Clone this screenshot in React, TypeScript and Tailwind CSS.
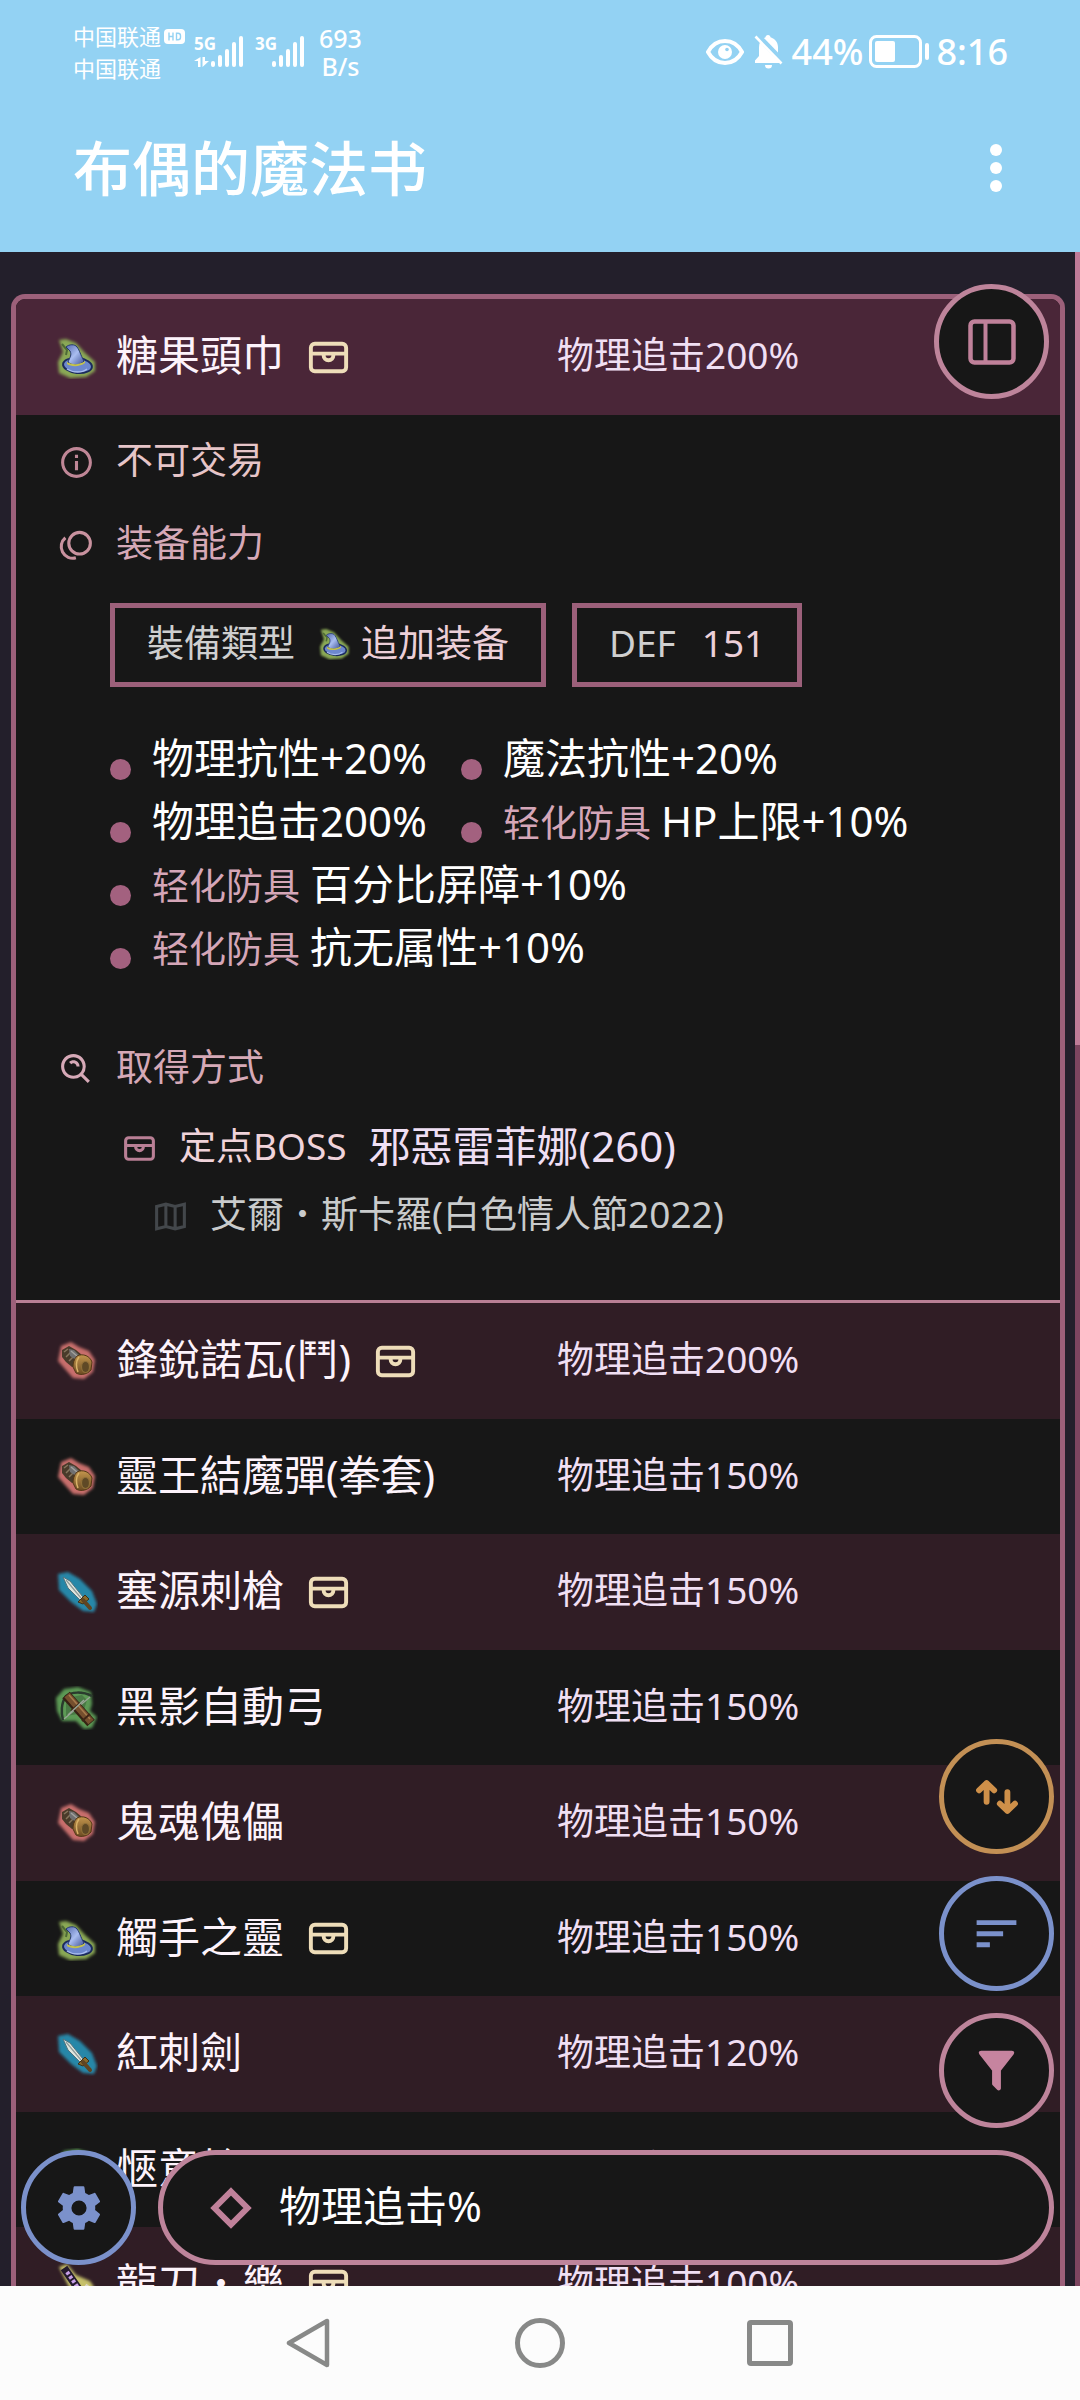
import type { ReactNode } from "react";
import { BiInfoCircle, BiSearchAlt } from "react-icons/bi";

type ItemKind = "hat" | "knuckle" | "sword" | "bow" | "katana";

interface Item {
  name: ReactNode;
  kind: ItemKind;
  stat: string;
  boss?: boolean;
}

/* Full-width interpunct used in item and map names */
function Dot() {
  return <span className="font-['Noto_Sans_CJK_TC',sans-serif] leading-none font-light">‧</span>;
}

const ITEMS: Item[] = [
  { name: "鋒銳諾瓦(鬥)", kind: "knuckle", stat: "物理追击200%", boss: true },
  { name: "靈王結魔彈(拳套)", kind: "knuckle", stat: "物理追击150%" },
  { name: "塞源刺槍", kind: "sword", stat: "物理追击150%", boss: true },
  { name: "黑影自動弓", kind: "bow", stat: "物理追击150%" },
  { name: "鬼魂傀儡", kind: "knuckle", stat: "物理追击150%" },
  { name: "觸手之靈", kind: "hat", stat: "物理追击150%", boss: true },
  { name: "紅刺劍", kind: "sword", stat: "物理追击120%" },
  { name: "愜意槍", kind: "bow", stat: "物理追击100%" },
  { name: <>龍刀<Dot />樂</>, kind: "katana", stat: "物理追击100%", boss: true },
];

/* ---------- item artwork ---------- */

function Defs() {
  return (
    <svg className="absolute size-0" aria-hidden="true">
      <defs>
        <filter id="glow" x="-30%" y="-30%" width="160%" height="160%">
          <feGaussianBlur stdDeviation="1.7" />
        </filter>
        <filter id="soft" x="-10%" y="-10%" width="120%" height="120%">
          <feGaussianBlur stdDeviation="0.5" />
        </filter>
        <linearGradient id="hatBlue" x1="0" y1="0" x2="1" y2="1">
          <stop offset="0" stopColor="#5468ac" />
          <stop offset="0.5" stopColor="#a9bdf0" />
          <stop offset="1" stopColor="#3d5094" />
        </linearGradient>
        <linearGradient id="cuff" x1="0" y1="0" x2="0" y2="1">
          <stop offset="0" stopColor="#c3954c" />
          <stop offset="1" stopColor="#6b4c24" />
        </linearGradient>
      </defs>
    </svg>
  );
}

function HatArt() {
  return (
    <>
      <path d="M5 5 12 4 22 8 31 18 41 27 41 36 32 42 16 43 5 38 4 27 9 17z" fill="#8aa855" filter="url(#glow)" />
      <g filter="url(#soft)">
        <path d="M8 9 13 15 12 20" stroke="#4d6a35" strokeWidth="2" fill="none" />
        <ellipse cx="23.5" cy="30.5" rx="15.5" ry="8.5" fill="#1d2c5c" transform="rotate(6 23.5 30.5)" />
        <ellipse cx="23.5" cy="30.5" rx="13.5" ry="6.5" fill="#6d88ce" transform="rotate(6 23.5 30.5)" />
        <path d="M12 12c3-3 9-3 11 0 3 4 3 7 7 14-4 5-12 5-16 1 2-5 4-7 2-11z" fill="url(#hatBlue)" stroke="#25376e" />
        <path d="M13 27c5 3 13 3 18-1v2c-5 4-14 4-18 1z" fill="#c4c24e" />
        <path d="M13 34c6 4 15 4 20 0" stroke="#a9bdf0" strokeWidth="1.5" fill="none" />
      </g>
    </>
  );
}

function KnuckleArt() {
  return (
    <>
      <path d="M7 7 17 3 25 8 35 12 41 21 39 33 30 40 19 39 11 30 4 22z" fill="#c86e6c" filter="url(#glow)" />
      <g filter="url(#soft)">
        <path d="M8 11 15 7 22 11 28 16 25 27 18 28 12 23 8 18z" fill="#4a3a2a" />
        <path d="M10 13 14 10M12 18 17 13M15 22 20 17" stroke="#86765c" strokeWidth="1.5" />
        <path d="M15 10 20 11 26 17 22 21 16 17z" fill="#6f7071" />
        <path d="m17 12 6 5" stroke="#a3a29d" strokeWidth="1.5" />
        <path d="M23 17c6-3 13 0 15 6l-1 8c-3 4-10 6-15 3l-3-6c0-4 1-8 4-11z" fill="url(#cuff)" stroke="#553817" />
        <ellipse cx="31.500" cy="28" rx="4" ry="5.5" fill="#5f4a26" stroke="#8f6f38" strokeWidth="1.2" />
        <path d="M25 18c-3 4-3 10-1 15" stroke="#d9b267" strokeWidth="1.5" fill="none" />
      </g>
    </>
  );
}

function SwordArt() {
  return (
    <>
      <path d="M4 4 14 2 26 9 38 21 43 34 40 42 29 41 17 32 5 20z" fill="#2787a8" filter="url(#glow)" />
      <g filter="url(#soft)">
        <path d="M9 7 16 11 29 27 26 30 14 18z" fill="#dfe6df" stroke="#53727c" />
        <path d="m12 10 15 18" stroke="#8c9a99" strokeWidth="1.2" />
        <path d="m24 32 7-7 4 4-6 5z" fill="#8a6a2b" stroke="#3c2f16" />
        <path d="m29 30 7 8" stroke="#5f4420" strokeWidth="4" strokeLinecap="round" />
      </g>
    </>
  );
}

function BowArt() {
  return (
    <>
      <path d="M10 3 24 1 37 6 38 18 36 25 43 31 38 42 30 43 22 35 8 35 3 25 2 12z" fill="#5c9a55" filter="url(#glow)" />
      <g filter="url(#soft)" fill="none">
        <path d="M12 12 28 9 33 14 30 24 24 28 12 30z" fill="#4a7a45" />
        <path d="M38 10C28 5 17 6 12 10 7 17 7 27 9 34" stroke="#2b3a2d" strokeWidth="2.5" />
        <path d="M36 11 10 33" stroke="#9aa697" strokeWidth="1.2" />
        <path d="m12 9 25 28" stroke="#362212" strokeWidth="10" />
        <path d="m13 9 24 27" stroke="#75502f" strokeWidth="7" />
        <path d="m15 9 21 24" stroke="#a87b4c" strokeWidth="1.5" />
        <path d="m28 35 8-7M17 25l9-8" stroke="#3f2817" strokeWidth="2" />
        <path d="M30 14 14 29" stroke="#9aa697" strokeWidth="1.5" />
      </g>
    </>
  );
}

function KatanaArt() {
  return (
    <>
      <path d="M5 4 13 1 22 12 36 18 40 24 30 40 20 34z" fill="#c6c06a" filter="url(#glow)" />
      <path d="m10 5 20 29" stroke="#241a2c" strokeWidth="8" />
      <path d="m13 9 14 20" stroke="#c8a0e8" strokeWidth="4" strokeDasharray="3 2" />
      <path d="m24 34 10-12" stroke="#ded6c2" strokeWidth="4" />
    </>
  );
}

const ART: Record<ItemKind, () => ReactNode> = {
  hat: HatArt,
  knuckle: KnuckleArt,
  sword: SwordArt,
  bow: BowArt,
  katana: KatanaArt,
};

function ItemIcon({ kind, small = false }: { kind: ItemKind; small?: boolean }) {
  const Art = ART[kind];
  return (
    <svg viewBox="0 0 44 44" className={small ? "size-[34px] shrink-0" : "size-[44px] shrink-0"} aria-hidden="true">
      <Art />
    </svg>
  );
}

/* ---------- line icons ---------- */

function ChestIcon({ className }: { className: string }) {
  return (
    <svg viewBox="0 0 24 24" fill="none" stroke="currentColor" strokeWidth="2" className={className} aria-hidden="true">
      <rect x="3" y="5" width="18" height="14" rx="2" />
      <path d="M3 10h18M9.5 10.3v.6a2.5 2.5 0 0 0 5 0v-.6" />
    </svg>
  );
}

function AbilityIcon() {
  return (
    <svg viewBox="0 0 24 24" fill="none" stroke="currentColor" strokeWidth="2" className="size-[37px] text-[#c9929f]" aria-hidden="true">
      <circle cx="14" cy="10.5" r="7" />
      <path d="M4.8 7A7.5 7.5 0 0 0 11.6 20" />
    </svg>
  );
}

function MapIcon() {
  return (
    <svg viewBox="0 0 24 24" fill="none" stroke="currentColor" strokeWidth="2" className="size-[37px] text-[#43474b]" aria-hidden="true">
      <path d="M3 5.5 9 4l6 1.5L21 4v14.5L15 20l-6-1.5L3 20zM9 4v14.5M15 5.5V20" />
    </svg>
  );
}

function PanelIcon() {
  return (
    <svg viewBox="0 0 48 46" fill="none" stroke="currentColor" strokeWidth="4.5" className="w-[48px]" aria-hidden="true">
      <rect x="2.5" y="2.5" width="43" height="41" rx="4" />
      <path d="M17.5 3v40" strokeWidth="4" />
    </svg>
  );
}

function SwapIcon() {
  return (
    <svg viewBox="0 0 24 24" fill="none" stroke="currentColor" strokeWidth="2.7" strokeLinecap="round" strokeLinejoin="round" className="size-[52px]" aria-hidden="true">
      <path d="M7.2 14.2V5.6M3.7 8.9l3.5-3.3 3.5 3.3M16.8 9.8v8.6M13.3 15.1l3.5 3.3 3.5-3.3" />
    </svg>
  );
}

function SortIcon() {
  return (
    <svg viewBox="0 0 24 24" fill="currentColor" className="size-[53px]" aria-hidden="true">
      <path d="M3 6h18v2.2H3zM3 11h12v2.2H3zM3 16h6v2.2H3z" />
    </svg>
  );
}

function FunnelIcon() {
  return (
    <svg viewBox="0 0 24 24" fill="currentColor" className="size-[53px]" aria-hidden="true">
      <path d="M14 12v7.88c.04.3-.06.62-.29.83a.996.996 0 0 1-1.41 0l-2.01-2.01a.989.989 0 0 1-.29-.83V12h-.03L4.21 4.62a1 1 0 0 1 .17-1.4c.19-.14.4-.22.62-.22h14c.22 0 .43.08.62.22a1 1 0 0 1 .17 1.4L14.03 12H14Z" />
    </svg>
  );
}

function CogIcon() {
  return (
    <svg viewBox="0 0 24 24" fill="currentColor" className="size-[52px]" aria-hidden="true">
      <path d="M12 15.5A3.5 3.5 0 0 1 8.5 12 3.5 3.5 0 0 1 12 8.5a3.5 3.5 0 0 1 3.5 3.5 3.5 3.5 0 0 1-3.5 3.5m7.43-2.53c.04-.32.07-.64.07-.97s-.03-.66-.07-1l2.11-1.63c.19-.15.24-.42.12-.64l-2-3.46c-.12-.22-.39-.31-.61-.22l-2.49 1c-.52-.39-1.06-.73-1.69-.98l-.37-2.65A.506.506 0 0 0 14 2h-4c-.25 0-.46.18-.5.42l-.37 2.65c-.63.25-1.17.59-1.69.98l-2.49-1c-.22-.09-.49 0-.61.22l-2 3.46c-.13.22-.07.49.12.64L4.57 11c-.04.34-.07.67-.07 1s.03.65.07.97l-2.11 1.66c-.19.15-.25.42-.12.64l2 3.46c.12.22.39.3.61.22l2.49-1.01c.52.4 1.06.74 1.69.99l.37 2.65c.04.24.25.42.5.42h4c.25 0 .46-.18.5-.42l.37-2.65c.63-.26 1.17-.59 1.69-.99l2.49 1.01c.22.08.49 0 .61-.22l2-3.46c.12-.22.07-.49-.12-.64z" />
    </svg>
  );
}

/* ---------- status bar ---------- */

function Signal({ label, data = false }: { label: string; data?: boolean }) {
  return (
    <div className="relative h-8 w-[50px]">
      <span className="absolute top-0 left-0 text-[17px] leading-4 font-bold">{label}</span>
      <svg viewBox="0 0 50 32" fill="currentColor" className="size-full" aria-hidden="true">
        {data && <path d="M6.5 21v10H4v-6H0zM8.5 21v10l6.5-6h-4v-4z" />}
        <rect x="17" y="25" width="4" height="6" rx="2" />
        <rect x="24" y="19" width="4" height="12" rx="2" />
        <rect x="31" y="13" width="4" height="18" rx="2" />
        <rect x="38" y="6" width="4" height="25" rx="2" />
        <rect x="45" y="0" width="4" height="31" rx="2" />
      </svg>
    </div>
  );
}

function StatusBar() {
  return (
    <div className="flex h-[104px] items-center justify-between pr-[72px] pl-[73px]">
      <div className="flex items-center">
        <div className="text-[22px] leading-8">
          <div className="flex items-center gap-[3px]">
            中国联通
            <svg viewBox="0 0 21 15" className="w-[21px]" aria-label="HD">
              <rect width="21" height="15" rx="4" fill="#fff" />
              <path d="M5 3.5v8M9 3.5v8M5 7.5h4M12.5 4.2h1.5a2.5 2.5 0 0 1 2.5 2.5v1.6a2.5 2.5 0 0 1-2.5 2.5h-1.5z" fill="none" stroke="#93d2f3" strokeWidth="1.4" />
            </svg>
          </div>
          <div>中国联通</div>
        </div>
        <div className="ml-[9px] flex gap-[11px]">
          <Signal label="5G" data />
          <Signal label="3G" />
        </div>
        <div className="ml-[14px] text-center text-[25px] leading-7 font-medium">
          <div>693</div>
          <div>B/s</div>
        </div>
      </div>
      <div className="flex items-center text-[36px] leading-[48px] font-medium">
        <svg viewBox="0 0 38 26" className="w-[38px]" aria-hidden="true">
          <path d="M2 13C6 5.5 12 2 19 2s13 3.5 17 11c-4 7.5-10 11-17 11S6 20.5 2 13z" fill="none" stroke="#fff" strokeWidth="4" />
          <circle cx="19" cy="13" r="7" fill="#fff" />
          <circle cx="21" cy="10.5" r="1.8" fill="#93d2f3" />
        </svg>
        <svg viewBox="0 0 30 34" className="ml-[10px] w-[30px]" aria-hidden="true">
          <path d="M14 0c1.5 0 2.5 1 2.5 2.3 4.5 1.4 7.5 5 7.5 10V21l4 4.5V28H1v-2.5L5 21v-8.7C5 7.3 7.5 3.7 11.5 2.3 11.5 1 12.5 0 14 0zM11 30h7a3.5 3.5 0 0 1-7 0z" fill="#fff" />
          <path d="m1-2 30 31" stroke="#93d2f3" strokeWidth="6" />
          <path d="m1.5 1.5 26 27" stroke="#fff" strokeWidth="2.6" />
        </svg>
        <span className="ml-2">44%</span>
        <svg viewBox="0 0 61 34" className="ml-1.5 w-[61px]" aria-hidden="true">
          <rect x="1.5" y="1.5" width="50" height="30" rx="6" fill="none" stroke="#fff" strokeWidth="3" />
          <rect x="6" y="6" width="20" height="21" rx="2" fill="#fff" />
          <rect x="56" y="8" width="4" height="17" rx="2" fill="#fff" />
        </svg>
        <span className="ml-1.5">8:16</span>
      </div>
    </div>
  );
}

/* ---------- list ---------- */

function ItemRow({ item, className }: { item: Item; className: string }) {
  return (
    <button type="button" className={`grid w-full grid-cols-2 items-center pl-[38px] text-left ${className}`}>
      <span className="flex items-center gap-[18px]">
        <ItemIcon kind={item.kind} />
        <span className="flex items-center gap-[21px] text-[42px] leading-[62px] text-[#fdf3fb]">
          <span className="pb-1">{item.name}</span>
          {item.boss && <ChestIcon className="size-[47px] text-[#eeddb9]" />}
        </span>
      </span>
      <span className="pb-1 text-[37px] leading-[56px] text-[#f0dff3]">{item.stat}</span>
    </button>
  );
}

function Caption({ icon, children, className }: { icon: ReactNode; children: ReactNode; className: string }) {
  return (
    <div className={`flex items-center gap-[21px] text-[37px] leading-[56px] ${className}`}>
      {icon}
      <h3 className="pb-1">{children}</h3>
    </div>
  );
}

function Ability({ tag, text }: { tag?: string; text: string }) {
  return (
    <li className="flex h-[63px] items-center">
      <span className="mt-6 mr-[21px] size-[21px] rounded-full bg-[#a3617f]" />
      {tag && <span className="mt-1 mr-[10px] text-[37px] leading-[56px] text-[#d5a6b8]">{tag}</span>}
      <span className="text-[42px] leading-[56px] text-white">{text}</span>
    </li>
  );
}

function Details() {
  return (
    <div className="border-b-[3px] border-[#b97f95] bg-[#171717] pt-[17px] pb-[52px] pl-[42px]">
      <Caption className="text-[#e6c5c8]" icon={<BiInfoCircle className="size-[37px] text-[#c08797]" />}>
        不可交易
      </Caption>
      <Caption className="mt-[23px] text-[#d6a9b7]" icon={<AbilityIcon />}>
        装备能力
      </Caption>

      <div className="mt-[28px] flex gap-[26px] pl-[52px] text-[37px] leading-[56px]">
        <div className="flex items-center border-[5px] border-[#9c607a] px-8 pt-[7px] pb-[11px]">
          <span className="mr-[22px] text-[#cfcfcf]">裝備類型</span>
          <ItemIcon kind="hat" small />
          <span className="ml-[10px] text-[#eccfd8]">追加装备</span>
        </div>
        <div className="flex items-center border-[5px] border-[#9c607a] px-8 pt-[7px] pb-[11px]">
          <span className="mr-[26px] text-[#cfcfcf]">DEF</span>
          <span className="text-[#eccfd8]">151</span>
        </div>
      </div>

      <ul className="mt-[39px] flex flex-wrap gap-x-[34px] pr-[100px] pl-[52px]">
        <Ability text="物理抗性+20%" />
        <Ability text="魔法抗性+20%" />
        <Ability text="物理追击200%" />
        <Ability tag="轻化防具" text="HP上限+10%" />
        <Ability tag="轻化防具" text="百分比屏障+10%" />
        <Ability tag="轻化防具" text="抗无属性+10%" />
      </ul>

      <Caption className="mt-[61px] text-[#d6a9b7]" icon={<BiSearchAlt className="size-[37px]" />}>
        取得方式
      </Caption>
      <div className="mt-[17px] flex items-center pl-[63px] leading-[60px]">
        <ChestIcon className="size-[37px] text-[#b97f95]" />
        <span className="ml-[21px] pb-1 text-[37px] text-[#f0d3da]">定点BOSS</span>
        <a href="#boss" className="ml-[22px] pb-1 text-[42px] text-[#efdff4]">
          邪惡雷菲娜(260)
        </a>
      </div>
      <div className="mt-1 flex items-center gap-[21px] pl-[94px] text-[37px] leading-[60px] text-[#c9cbcc]">
        <MapIcon />
        <span className="pb-1">
          艾爾
          <Dot />
          斯卡羅(白色情人節2022)
        </span>
      </div>
    </div>
  );
}

function RoundButton({ label, className, children }: { label: string; className: string; children: ReactNode }) {
  return (
    <button
      type="button"
      aria-label={label}
      className={`flex size-[115px] shrink-0 items-center justify-center rounded-full border-[5px] bg-[#171717] ${className}`}
    >
      {children}
    </button>
  );
}

export default function App() {
  return (
    <div className="flex h-screen flex-col overflow-hidden bg-[#231f2b] font-['Noto_Sans','Noto_Sans_CJK_SC',sans-serif]">
      <Defs />
      <header className="h-[252px] shrink-0 bg-[#93d2f3] text-white">
        <StatusBar />
        <div className="flex h-[128px] items-center justify-between pr-[60px] pl-[73px]">
          <h1 className="text-[59px] leading-[80px] font-medium">布偶的魔法书</h1>
          <button type="button" aria-label="菜单" className="flex w-12 flex-col items-center gap-1.5">
            <span className="size-3 rounded-full bg-white" />
            <span className="size-3 rounded-full bg-white" />
            <span className="size-3 rounded-full bg-white" />
          </button>
        </div>
      </header>

      <main className="relative min-h-0 flex-1">
        <div className="h-full overflow-hidden pt-[42px] pr-[15px] pl-[11px]">
          <section className="overflow-hidden rounded-t-[14px] border-[5px] border-b-0 border-[#9c607a] bg-[#171717]">
            <ItemRow item={{ name: "糖果頭巾", kind: "hat", stat: "物理追击200%", boss: true }} className="h-[116px] bg-[#4a2638]" />
            <Details />
            <ul>
              {ITEMS.map((item, i) => (
                <li key={i}>
                  <ItemRow item={item} className={i % 2 === 0 ? "h-[116px] bg-[#301d25]" : "h-[115px] bg-[#171717]"} />
                </li>
              ))}
            </ul>
          </section>
        </div>

        <div className="absolute inset-y-0 right-0 w-[5px] bg-[#7d4560]" aria-hidden="true">
          <div className="h-[39%] bg-[#bf7b98]" />
        </div>

        <div className="absolute top-8 right-[31px]">
          <RoundButton label="版面" className="border-[#be849b] text-[#c0819a]">
            <PanelIcon />
          </RoundButton>
        </div>

        <div className="absolute inset-x-0 bottom-[21px] flex flex-col items-end gap-[22px] pr-[26px] pl-[21px]">
          <RoundButton label="切换" className="border-[#c39055] text-[#cf9049]">
            <SwapIcon />
          </RoundButton>
          <RoundButton label="排序" className="border-[#7b91cb] text-[#7b91cb]">
            <SortIcon />
          </RoundButton>
          <RoundButton label="筛选" className="border-[#be849b] text-[#c6849f]">
            <FunnelIcon />
          </RoundButton>
          <div className="flex w-full gap-[22px]">
            <RoundButton label="设置" className="border-[#7b91cb] text-[#7b91cb]">
              <CogIcon />
            </RoundButton>
            <label className="flex h-[115px] min-w-0 flex-1 items-center rounded-full border-[5px] border-[#be849b] bg-[#171717] pr-12 pl-[47px]">
              <svg viewBox="0 0 42 42" className="w-[42px] shrink-0" fill="none" stroke="#c0819a" strokeWidth="6" aria-hidden="true">
                <path d="M21 4.5 37.5 21 21 37.5 4.5 21z" />
              </svg>
              <input
                type="text"
                aria-label="搜索"
                defaultValue="物理追击%"
                className="ml-[27px] min-w-0 flex-1 bg-transparent pb-1 text-[42px] leading-[62px] text-white outline-none"
              />
            </label>
          </div>
        </div>
      </main>

      <nav className="flex h-[114px] shrink-0 items-center justify-center bg-[#fcfcfc] text-[#888988]">
        <button type="button" aria-label="返回" className="flex w-[230px] justify-center">
          <svg viewBox="0 0 50 50" className="size-[50px]" fill="none" stroke="currentColor" strokeWidth="4.5" strokeLinejoin="round" aria-hidden="true">
            <path d="M42 3v44L4 25z" />
          </svg>
        </button>
        <button type="button" aria-label="主页" className="flex w-[230px] justify-center">
          <span className="size-[50px] rounded-full border-[5px] border-[#888988]" />
        </button>
        <button type="button" aria-label="最近" className="flex w-[230px] justify-center">
          <span className="size-[46px] rounded-[4px] border-[5px] border-[#888988]" />
        </button>
      </nav>
    </div>
  );
}
